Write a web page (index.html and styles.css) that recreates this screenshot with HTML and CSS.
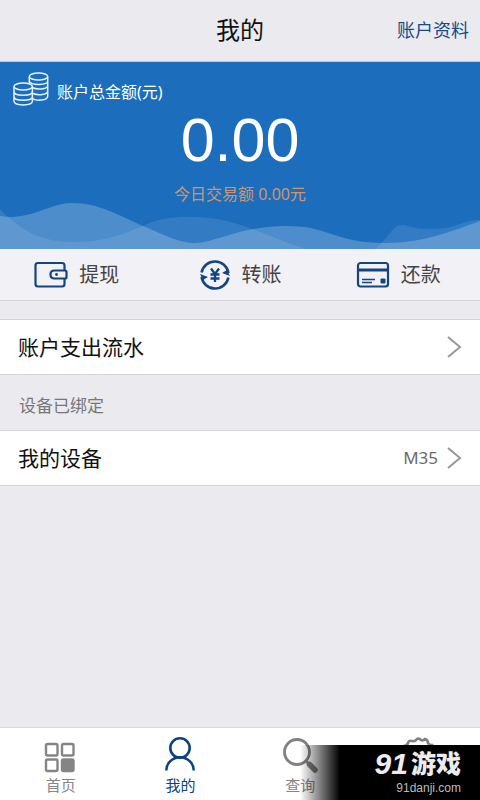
FILE: index.html
```
<!DOCTYPE html>
<html lang="zh-CN">
<head>
<meta charset="utf-8">
<meta name="viewport" content="width=device-width, initial-scale=1">
<title>我的</title>
<link rel="stylesheet" href="styles.css">
</head>
<body>
<header class="topbar">
  <h1 class="title">我的</h1>
  <a class="profile-link" href="#">账户资料</a>
</header>

<main class="content">
  <section class="balance">
    <div class="balance-label">
      <svg class="coins" width="36" height="34" viewBox="0 0 36 34" fill="none" stroke="#e4f3ff" stroke-width="1.5">
        <ellipse cx="25.500" cy="4.500" rx="9.200" ry="3.500"/>
        <path d="M16.300 4.500v7.500M34.700 4.500V24c0 5-12 5-15 2.500M16.500 9.500c2 4 18 4 18.200-.5M19 15.500c5 2.500 15.500 2 15.700-2M20 21.500c5 2 14.500 1.500 14.700-2.500"/>
        <ellipse cx="10.200" cy="14.500" rx="9.200" ry="3.500"/>
        <path d="M1 14.500V29c0 5.200 18.400 5.200 18.400 0V14.500M1 19.500c0 5 18.400 5 18.400 0M1 24.500c0 5 18.400 5 18.400 0"/>
      </svg>
      <span>账户总金额(元)</span>
    </div>
    <p class="amount">0.00</p>
    <p class="today">今日交易额 0.00元</p>
    <svg class="waves" viewBox="0 0 480 59" preserveAspectRatio="none" fill="#fff">
      <path fill-opacity=".1" d="M0 19C22 42 42 52 73 52C103 52 119 46 143 36C158 29 168 27 190 27C233 27 248 39 305 59H0Z"/>
      <path fill-opacity=".1" d="M375 59C386 52 392 35 402 35C409 35 410 39 432 39C459 39 461 30 480 30V59Z"/>
      <path fill-opacity=".22" d="M0 26C31 31 48 13 73 13C98 13 118 25 143 36C165 45 178 53 195 53C216 53 240 36 287 36C331 36 333 53 385 53C423 53 453 41 480 31V59H0Z"/>
    </svg>
  </section>

  <nav class="actions">
    <button class="action" type="button">
      <svg width="34" height="28" viewBox="0 0 34 28" fill="none" stroke="#124581" stroke-width="2.200">
        <path d="M30.500 9V4.500Q30.500 2 28 2H4Q1.500 2 1.500 4.500V23Q1.500 25.500 4 25.500H28Q30.500 25.500 30.500 23V18"/>
        <path d="M31 9.500H20.500Q16.500 9.500 16.500 13.500T20.500 17.500H31Q32.500 17.500 32.500 16V11Q32.500 9.500 31 9.500Z"/>
        <circle cx="22.500" cy="13.500" r="1.400" fill="#124581" stroke="none"/>
      </svg>
      <span>提现</span>
    </button>
    <button class="action" type="button">
      <svg width="30" height="30" viewBox="1 1 30 30" fill="none" stroke="#124581" stroke-width="2.600">
        <path d="M2.600 13.500A13.600 13.600 0 0 1 29.400 14M29.400 18.500A13.600 13.600 0 0 1 2.600 18"/>
        <path d="M31 17L23 14L28 11ZM1 15L9 18L4 21Z" fill="#124581" stroke="none"/>
        <path d="M12 9.500L16 15L20 9.500M16 15V23M11.500 15.500H20.500M11.500 19.500H20.500" stroke-width="2.300"/>
      </svg>
      <span>转账</span>
    </button>
    <button class="action" type="button">
      <svg width="34" height="28" viewBox="0 0 34 28" fill="none" stroke="#124581" stroke-width="2.200">
        <rect x="2" y="2" width="30" height="23.500" rx="2.500"/>
        <path d="M2 9H32" stroke-width="3"/>
        <path d="M6 18.500H19M6 21.500H16" stroke-width="1.500"/>
        <rect x="24.500" y="17.500" width="5" height="5" rx="1" fill="#124581" stroke="none"/>
      </svg>
      <span>还款</span>
    </button>
  </nav>

  <a class="row" href="#">
    <span class="row-name">账户支出流水</span>
    <svg class="chevron" width="16" height="22" viewBox="0 0 16 22"><path d="M2 1L14 11L2 21"/></svg>
  </a>
  <h2 class="group-title">设备已绑定</h2>
  <a class="row" href="#">
    <span class="row-name">我的设备</span>
    <span class="row-value">M35</span>
    <svg class="chevron" width="16" height="22" viewBox="0 0 16 22"><path d="M2 1L14 11L2 21"/></svg>
  </a>
</main>

<footer class="footer">
  <nav class="tabs">
    <button class="tab" type="button">
      <svg width="36" height="36" viewBox="0 0 36 36" fill="none" stroke="#858585" stroke-width="2.400">
        <rect x="3" y="7" width="11.500" height="11.500" rx="1.500"/>
        <rect x="19" y="7" width="11.500" height="11.500" rx="1.500"/>
        <rect x="3" y="22.500" width="11.500" height="11.500" rx="1.500"/>
        <rect x="19" y="22.500" width="11.500" height="11.500" rx="1.500" fill="#858585"/>
      </svg>
      <span>首页</span>
    </button>
    <button class="tab tab-current" type="button">
      <svg width="36" height="36" viewBox="0 0 36 36" fill="none" stroke="#0b427f" stroke-width="2.600">
        <circle cx="17" cy="11" r="9.700"/>
        <path d="M3.300 33.500A13.700 13.200 0 0 1 30.700 33.500"/>
      </svg>
      <span>我的</span>
    </button>
    <button class="tab" type="button">
      <svg width="36" height="36" viewBox="0 0 36 36" fill="none" stroke="#808080" stroke-width="2.800">
        <circle cx="15" cy="15" r="12.500"/>
        <path d="M24 24L27 27"/>
        <path d="M27.500 27.500L33 33" stroke-width="5.500" stroke-linecap="round"/>
      </svg>
      <span>查询</span>
    </button>
    <button class="tab" type="button" aria-label="设置">
      <svg width="36" height="36" viewBox="0 0 36 36" fill="none" stroke="#808080" stroke-width="2.600">
        <path d="M10 4Q13 5 15 2Q17 1 19 3Q21 4 23 2Q26 3 26 6Q27 8 30 8Q30 12 29 15Q30 18 32 22Q32 26 26 27Q24 31 21 31Q15 29 10 31Q6 31 5 27Q1 26 1 22Q3 18 2 15Q1 11 2 9Q5 9 6 6Q7 3 10 4Z"/>
      </svg>
    </button>
  </nav>
  <div class="brand">
    <div class="brand-name"><span class="brand-number">91</span><span>游戏</span></div>
    <div class="brand-site">91danji.com</div>
  </div>
</footer>
</body>
</html>
```
FILE: styles.css
```
* {
  box-sizing: border-box;
}

body {
  margin: 0;
  min-height: 100vh;
  display: flex;
  flex-direction: column;
  background: #ebeaef;
  color: #111;
  font-family: "Noto Sans", "Noto Sans CJK SC", sans-serif;
}

h1, h2, p {
  margin: 0;
  font-weight: 400;
}

a {
  color: inherit;
  text-decoration: none;
}

button {
  border: 0;
  padding: 0;
  background: none;
  color: inherit;
  font: inherit;
}

svg {
  display: block;
  flex: none;
}

.topbar {
  display: grid;
  grid-template-columns: 1fr auto 1fr;
  align-items: center;
  height: 62px;
  padding: 0 11px 2px;
  border-bottom: 1px solid #b5cde3;
}

.title {
  grid-column: 2;
  font-size: 24px;
  line-height: 36px;
}

.profile-link {
  justify-self: end;
  color: #174b87;
  font-size: 18px;
  line-height: 28px;
}

.content {
  flex: 1;
}

.balance {
  display: flex;
  flex-direction: column;
  height: 187px;
  background: #1c6ebd;
  color: #fff;
  text-align: center;
}

.balance-label {
  display: flex;
  align-items: flex-start;
  gap: 8px;
  padding: 10px 13px 0;
  font-size: 16px;
  line-height: 40px;
}

.amount {
  font-family: "Liberation Sans", sans-serif;
  font-size: 61px;
  line-height: 56px;
}

.today {
  padding-top: 16px;
  color: #d1956c;
  font-size: 16px;
  line-height: 20px;
}

.waves {
  width: 100%;
  height: 59px;
  margin-top: -14px;
}

.actions {
  display: grid;
  grid-template-columns: 22fr 25fr 20fr;
  height: 52px;
  margin-bottom: 18px;
  padding-right: 12px;
  border-bottom: 1px solid #d4d4d8;
  background: #f2f1f6;
  color: #444;
}

.action {
  display: flex;
  align-items: center;
  justify-content: center;
  gap: 11px;
  font-size: 20px;
  line-height: 30px;
}

.row {
  display: flex;
  align-items: center;
  height: 56px;
  padding: 0 18px;
  border-top: 1px solid #d4d4d8;
  border-bottom: 1px solid #d4d4d8;
  background: #fff;
}

.row-name {
  flex: 1;
  font-size: 21px;
  line-height: 32px;
}

.row-value {
  margin-right: 8px;
  color: #6c6c6c;
  font-size: 17px;
  line-height: 24px;
}

.chevron {
  fill: none;
  stroke: #999;
  stroke-width: 2;
}

.group-title {
  padding: 18px 19px 12px;
  color: #77777a;
  font-size: 17px;
  line-height: 25px;
}

.footer {
  position: relative;
}

.tabs {
  display: grid;
  grid-template-columns: repeat(4, 1fr);
  height: 73px;
  padding-left: 1px;
  border-top: 1px solid #d8d8dc;
  background: #fff;
  color: #858585;
}

.tab {
  display: flex;
  flex-direction: column;
  align-items: center;
  padding-top: 9px;
  font-size: 15px;
  line-height: 24px;
}

.tab-current {
  color: #0b427f;
}

.brand {
  position: absolute;
  right: 0;
  bottom: 0;
  width: 180px;
  height: 55px;
  padding: 3px 19px 0 0;
  background: linear-gradient(to right, rgba(0, 0, 0, 0), #000 40px);
  color: #ececec;
  text-align: right;
}

.brand-name {
  display: flex;
  justify-content: flex-end;
  gap: 3px;
  font-size: 25px;
  font-weight: 900;
  line-height: 31px;
}

.brand-number {
  font-family: "Liberation Sans", sans-serif;
  font-size: 30px;
  font-style: italic;
}

.brand-site {
  padding-top: 2px;
  color: #bbb;
  font-family: "Liberation Sans", sans-serif;
  font-size: 12px;
  line-height: 14px;
}
```
